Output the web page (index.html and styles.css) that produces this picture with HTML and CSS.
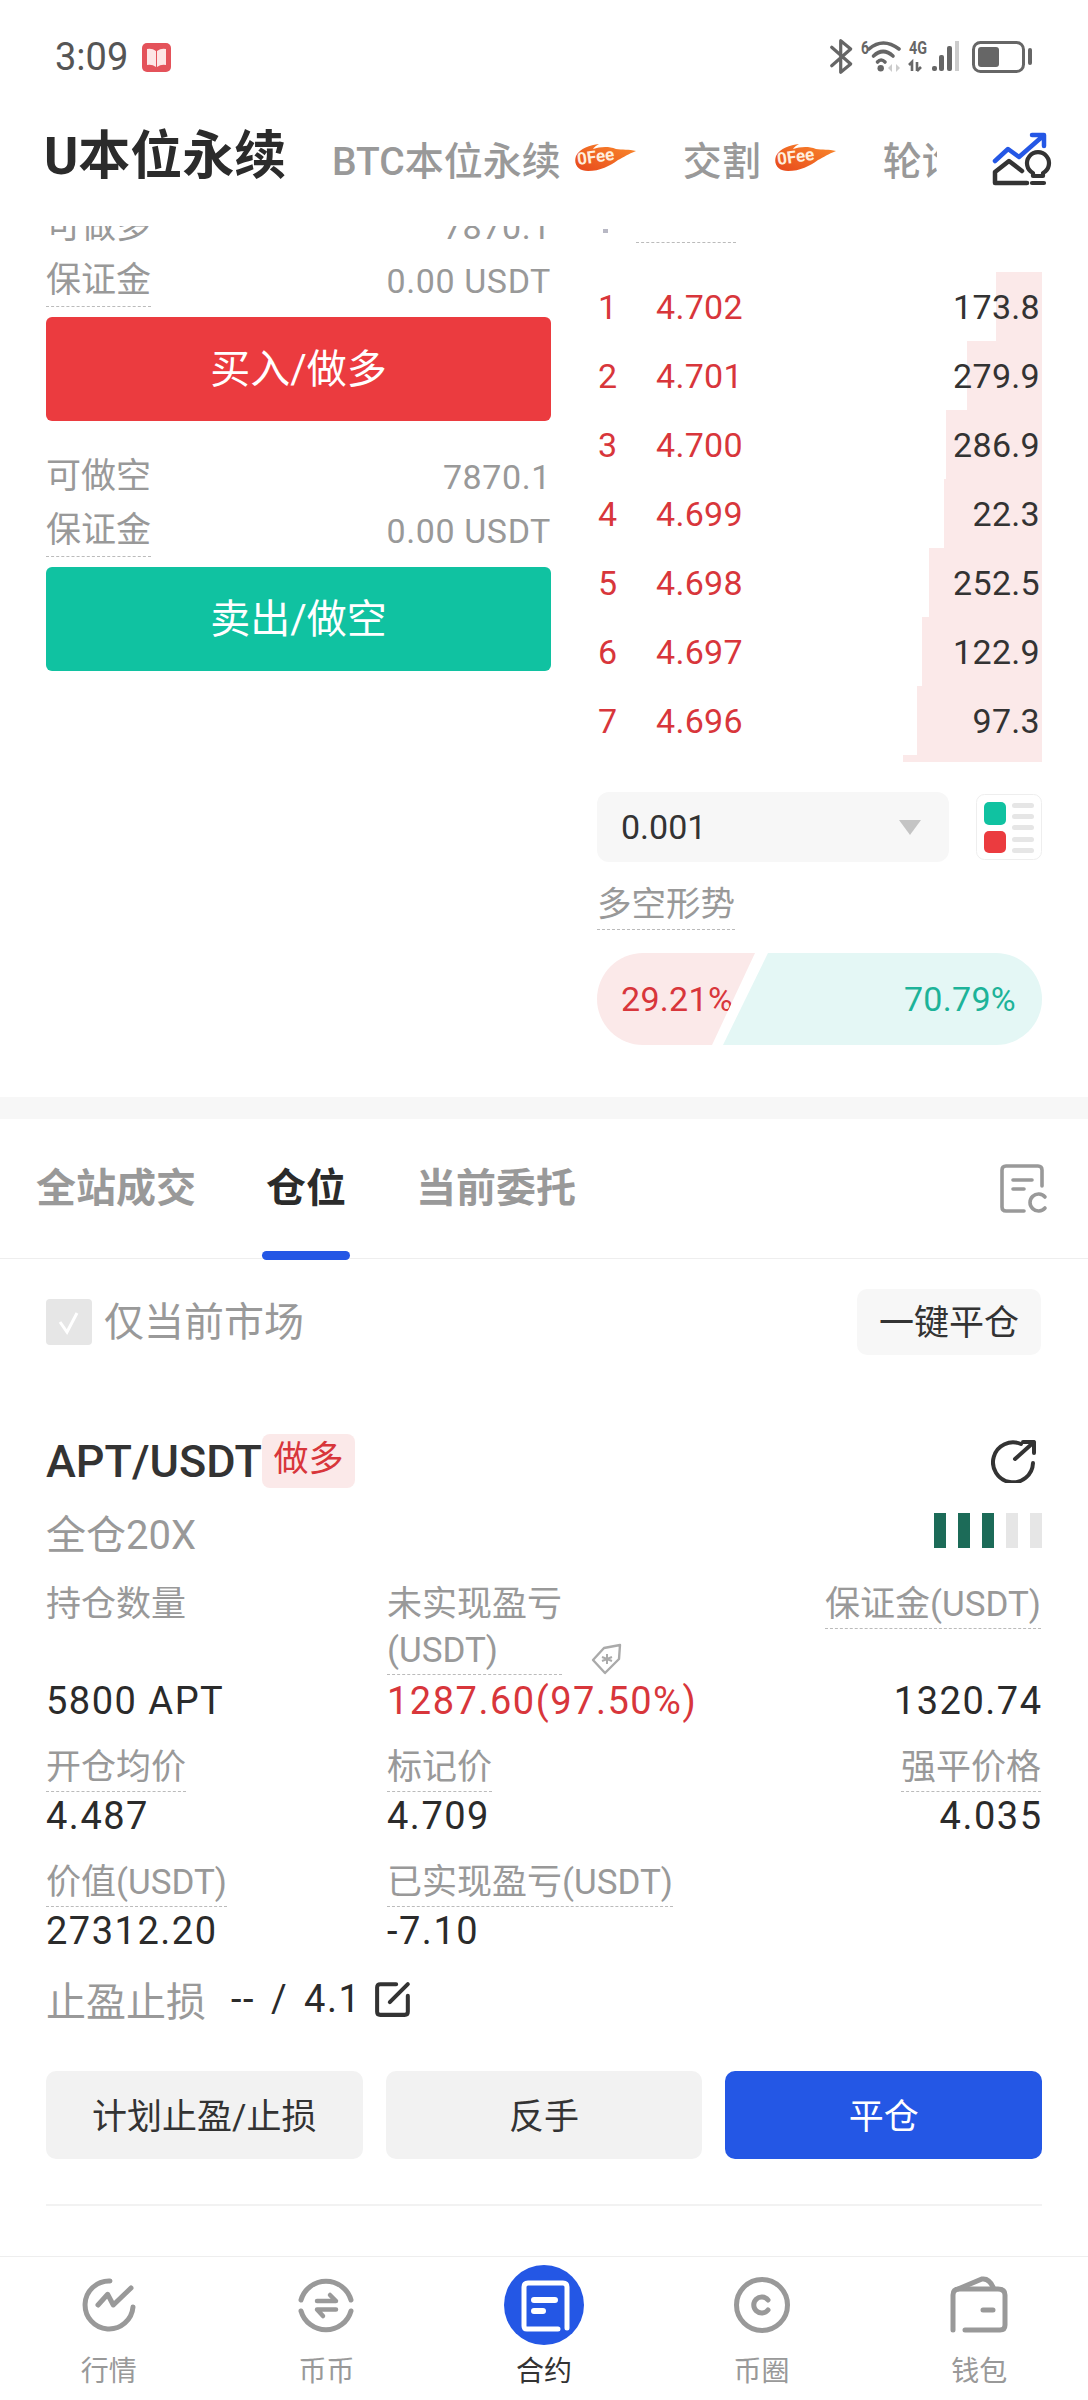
FILE: index.html
```html
<!DOCTYPE html>
<html lang="zh-Hans">
<head>
  <meta charset="UTF-8" />
  <meta name="viewport" content="width=device-width, initial-scale=1.0" />
  <title>U本位永续</title>
  <link rel="stylesheet" href="styles.css">
</head>
<body>
  <div class="status-bar">
    <div class="status-left">
      <span class="clock">3:09</span>
      <svg class="status-book" viewBox="0 0 29 29">
        <rect width="29" height="29" rx="5" fill="#e4525a"/>
        <path d="M5 6 Q10 5 14 8 V24 Q10 21 5 22 Z M24 6 Q19 5 15 8 V24 Q19 21 24 22 Z" fill="#fde6e6"/>
      </svg>
    </div>
    <svg class="status-right" viewBox="0 0 210 40">
      <path d="M3.7 10.3 L22.7 27 L12.7 35.3 V3.7 L22.7 12 L3.7 28.7" fill="none" stroke="#666" stroke-width="3.2" stroke-linejoin="round" stroke-linecap="round"/>
      <text x="33" y="17" class="status-tiny" textLength="8" lengthAdjust="spacingAndGlyphs">6</text>
      <g fill="none" stroke="#666" stroke-width="3.6" stroke-linecap="round">
        <path d="M41 12 Q55 0 71 12"/>
        <path d="M45.5 19 Q55 10 65 19"/>
        <path d="M49.5 25 Q53 21 57 25"/>
      </g>
      <circle cx="52.7" cy="31.3" r="3.2" fill="#666"/>
      <path d="M60 31 L64 27 V35 Z M72 31 L68 27 V35 Z" fill="#ccc"/>
      <text x="81" y="17" class="status-tiny" textLength="18" lengthAdjust="spacingAndGlyphs">4G</text>
      <path d="M84 34 V25 L81 28 M89 25 V34 M89 34 L93 30" fill="none" stroke="#666" stroke-width="2.6"/>
      <rect x="104" y="29" width="5" height="5" rx="2" fill="#666"/>
      <rect x="111" y="18" width="5" height="16" rx="2" fill="#666"/>
      <rect x="119" y="9" width="5" height="25" rx="2" fill="#666"/>
      <rect x="127" y="4" width="4" height="30" fill="#ccc"/>
      <rect x="145.5" y="5.5" width="50" height="29" rx="7" fill="none" stroke="#666" stroke-width="3"/>
      <rect x="150" y="10" width="21" height="20" rx="3" fill="#666"/>
      <rect x="200" y="11" width="4" height="17" rx="2" fill="#666"/>
    </svg>
  </div>

  <header class="top-nav">
    <div class="nav-title">U本位永续</div>
    <div class="nav-tabs">
      <span class="nav-tab">BTC本位永续</span>
      <svg class="flame" viewBox="0 0 62 28">
        <defs>
          <linearGradient id="flameFill" x1="0" y1="1" x2="1" y2="0">
            <stop offset="0" stop-color="#e8481c"/>
            <stop offset="1" stop-color="#f98a2c"/>
          </linearGradient>
        </defs>
        <path d="M2 12 C6 4 16 1 25 0 C22 2 20 3 19 5 C26 3 34 2 42 5 C48 6 55 5 62 7 C54 10 50 13 44 16 C36 22 26 27 14 27 C5 27 -1 21 2 12 Z" fill="url(#flameFill)"/>
        <text x="4" y="21" class="flame-text" transform="rotate(-8 4 21)">0Fee</text>
      </svg>
      <span class="nav-tab nav-tab-gap">交割</span>
      <svg class="flame" viewBox="0 0 62 28">
        <path d="M2 12 C6 4 16 1 25 0 C22 2 20 3 19 5 C26 3 34 2 42 5 C48 6 55 5 62 7 C54 10 50 13 44 16 C36 22 26 27 14 27 C5 27 -1 21 2 12 Z" fill="url(#flameFill)"/>
        <text x="4" y="21" class="flame-text" transform="rotate(-8 4 21)">0Fee</text>
      </svg>
      <span class="nav-tab nav-tab-gap">轮询</span>
    </div>
    <svg class="nav-icon" viewBox="0 0 70 60">
      <path d="M8 31 L21 19 L32 27 L56 6 M45 5 H57 V16" fill="none" stroke="#2457e5" stroke-width="4.5" stroke-linecap="round" stroke-linejoin="round"/>
      <path d="M40 53 H8 V42 L22 31 L35 41" fill="none" stroke="#333" stroke-width="4.5" stroke-linecap="round" stroke-linejoin="round"/>
      <path d="M46 46 V43 A11 11 0 1 1 56 43 V46 Z M45 53 H57" fill="none" stroke="#333" stroke-width="4.2" stroke-linecap="round" stroke-linejoin="round"/>
    </svg>
  </header>

  <div class="trade">
    <div class="trade-left">
      <div class="form-row"><span class="dash-none">可做多</span><span>7870.1</span></div>
      <div class="form-row"><span class="dash">保证金</span><span>0.00 USDT</span></div>
      <button class="trade-btn buy">买入/做多</button>
      <div class="form-row form-row-gap"><span class="dash-none">可做空</span><span>7870.1</span></div>
      <div class="form-row"><span class="dash">保证金</span><span>0.00 USDT</span></div>
      <button class="trade-btn sell">卖出/做空</button>
    </div>

    <div class="trade-right">
      <div class="book-head"><i class="book-dot"></i><i class="book-dash"></i></div>
      <div class="book-row"><i class="book-bar" style="width:46px"></i><span class="book-no">1</span><span class="book-price">4.702</span><span class="book-vol">173.8</span></div>
      <div class="book-row"><i class="book-bar" style="width:75px"></i><span class="book-no">2</span><span class="book-price">4.701</span><span class="book-vol">279.9</span></div>
      <div class="book-row"><i class="book-bar" style="width:96px"></i><span class="book-no">3</span><span class="book-price">4.700</span><span class="book-vol">286.9</span></div>
      <div class="book-row"><i class="book-bar" style="width:98px"></i><span class="book-no">4</span><span class="book-price">4.699</span><span class="book-vol">22.3</span></div>
      <div class="book-row"><i class="book-bar" style="width:113px"></i><span class="book-no">5</span><span class="book-price">4.698</span><span class="book-vol">252.5</span></div>
      <div class="book-row"><i class="book-bar" style="width:120px"></i><span class="book-no">6</span><span class="book-price">4.697</span><span class="book-vol">122.9</span></div>
      <div class="book-row"><i class="book-bar" style="width:125px"></i><span class="book-no">7</span><span class="book-price">4.696</span><span class="book-vol">97.3</span></div>
      <div class="book-tail"></div>

      <div class="book-tools">
        <div class="depth-select"><span>0.001</span><i class="caret"></i></div>
        <svg class="layout-icon" viewBox="0 0 66 66">
          <rect x="0.5" y="0.5" width="65" height="65" rx="8" fill="#fff" stroke="#eee"/>
          <rect x="8" y="8" width="22" height="23" rx="5" fill="#10c2a1"/>
          <rect x="8" y="37" width="22" height="22" rx="5" fill="#eb3b3f"/>
          <g fill="#e6e6e6">
            <rect x="36" y="9" width="22" height="5" rx="2.5"/>
            <rect x="36" y="20" width="22" height="5" rx="2.5"/>
            <rect x="36" y="31" width="22" height="5" rx="2.5"/>
            <rect x="36" y="43" width="22" height="5" rx="2.5"/>
            <rect x="36" y="54" width="22" height="5" rx="2.5"/>
          </g>
        </svg>
      </div>

      <div class="trend-label"><span class="dash">多空形势</span></div>
      <div class="trend-pill">
        <span class="trend-long">29.21%</span>
        <span class="trend-short">70.79%</span>
      </div>
    </div>
  </div>

  <div class="band"></div>

  <div class="list-tabs">
    <div class="list-tab">全站成交</div>
    <div class="list-tab active">仓位</div>
    <div class="list-tab">当前委托</div>
    <svg class="list-icon" viewBox="0 0 48 50">
      <path d="M42 22 V6 Q42 2 38 2 H6 Q2 2 2 6 V43 Q2 47 6 47 H24 M13 16 H32 M13 25 H24" fill="none" stroke="#999" stroke-width="3.6" stroke-linecap="round"/>
      <path d="M45 33 A8.5 8.5 0 1 0 45 44" fill="none" stroke="#999" stroke-width="3.6" stroke-linecap="round"/>
    </svg>
  </div>

  <div class="filter-row">
    <div class="filter-check">
      <span class="checkbox">
        <svg viewBox="0 0 46 46"><path d="M14 23 L21 33 L31 14" fill="none" stroke="#fff" stroke-width="3"/></svg>
      </span>
      <span class="filter-text">仅当前市场</span>
    </div>
    <button class="close-all">一键平仓</button>
  </div>

  <section class="position">
    <div class="pos-title">
      <span class="pos-symbol">APT/USDT</span>
      <span class="pos-tag">做多</span>
      <svg class="pos-share" viewBox="0 0 48 44">
        <path d="M30 5 A20 20 0 1 0 42 24" fill="none" stroke="#333" stroke-width="4" stroke-linecap="round"/>
        <path d="M24 20 L43 3 M32 3 H43 V14" fill="none" stroke="#333" stroke-width="4" stroke-linecap="round" stroke-linejoin="round"/>
      </svg>
    </div>
    <div class="pos-lever">
      <span>全仓20X</span>
      <div class="risk-bars">
        <i class="on"></i><i class="on"></i><i class="on"></i><i></i><i></i>
      </div>
    </div>

    <div class="pos-grid">
      <div class="cell">
        <span class="cell-label plain">持仓数量</span>
        <span class="cell-value">5800 APT</span>
      </div>
      <div class="cell cell-pnl">
        <span class="cell-label">未实现盈亏<br>(USDT)</span>
        <svg class="pnl-tag" viewBox="0 0 32 32">
          <path d="M29 2 L13 5 L2 17 L14 30 L28 16 Z" fill="none" stroke="#aaa" stroke-width="2.4" stroke-linejoin="round"/>
          <path d="M16 11 V21 M11 14 L21 18 M11 18 L21 14" stroke="#aaa" stroke-width="2"/>
        </svg>
        <span class="cell-value red">1287.60(97.50%)</span>
      </div>
      <div class="cell cell-end">
        <span class="cell-label">保证金(USDT)</span>
        <span class="cell-value">1320.74</span>
      </div>
      <div class="cell">
        <span class="cell-label">开仓均价</span>
        <span class="cell-value">4.487</span>
      </div>
      <div class="cell">
        <span class="cell-label">标记价</span>
        <span class="cell-value">4.709</span>
      </div>
      <div class="cell cell-end">
        <span class="cell-label">强平价格</span>
        <span class="cell-value">4.035</span>
      </div>
      <div class="cell">
        <span class="cell-label">价值(USDT)</span>
        <span class="cell-value">27312.20</span>
      </div>
      <div class="cell">
        <span class="cell-label">已实现盈亏(USDT)</span>
        <span class="cell-value">-7.10</span>
      </div>
    </div>

    <div class="pos-tpsl">
      <span class="tpsl-label">止盈止损</span>
      <span class="tpsl-value">-- / 4.1</span>
      <svg class="tpsl-edit" viewBox="0 0 34 34">
        <path d="M20 3 H5 Q2 3 2 6 V29 Q2 32 5 32 H28 Q31 32 31 29 V14 M14 20 L31 3" fill="none" stroke="#333" stroke-width="3.8" stroke-linecap="round"/>
      </svg>
    </div>

    <div class="pos-actions">
      <button class="pos-btn">计划止盈/止损</button>
      <button class="pos-btn">反手</button>
      <button class="pos-btn primary">平仓</button>
    </div>
    <div class="pos-divider"></div>
  </section>

  <nav class="bottom-nav">
    <a class="nav-item">
      <svg viewBox="0 0 80 80">
        <path d="M41 16 A24 24 0 1 0 64 42" fill="none" stroke="#999" stroke-width="5" stroke-linecap="round"/>
        <path d="M29 40 L38.7 29.3 L44.3 40 L62 23" fill="none" stroke="#999" stroke-width="5" stroke-linecap="round" stroke-linejoin="round"/>
      </svg>
      行情
    </a>
    <a class="nav-item">
      <svg viewBox="0 0 80 80">
        <path d="M15 35 A26 26 0 0 1 65 35 M15 46 A26 26 0 0 0 65 46" fill="none" stroke="#999" stroke-width="5" stroke-linecap="round"/>
        <path d="M31 36 H50 L44 30 M50 44.5 H31 L37 51" fill="none" stroke="#999" stroke-width="4.5" stroke-linecap="round" stroke-linejoin="round"/>
      </svg>
      币币
    </a>
    <a class="nav-item active">
      <svg viewBox="0 0 80 80">
        <circle cx="40" cy="40" r="40" fill="#2457e5"/>
        <path d="M54 64 H23 Q20 64 20 61 V22 Q20 18 24 18 H59 Q63 18 63 22 V63" fill="none" stroke="#fff" stroke-width="5" stroke-linecap="round"/>
        <path d="M30 35 H51 M30 46 H39" fill="none" stroke="#fff" stroke-width="6" stroke-linecap="round"/>
      </svg>
      合约
    </a>
    <a class="nav-item">
      <svg viewBox="0 0 80 80">
        <circle cx="40" cy="40" r="25.5" fill="none" stroke="#999" stroke-width="5"/>
        <path d="M46 35 A8 8 0 1 0 46 45" fill="none" stroke="#999" stroke-width="5" stroke-linecap="round"/>
      </svg>
      币圈
    </a>
    <a class="nav-item">
      <svg viewBox="0 0 80 80">
        <path d="M14 65 V30 Q14 24 20 24 H59 Q66 24 66 30 V60 Q66 65 61 65 H26" fill="none" stroke="#999" stroke-width="5" stroke-linecap="round"/>
        <path d="M19 24 L43 14 Q50 13 54 22 M44 45 H54" fill="none" stroke="#999" stroke-width="5" stroke-linecap="round"/>
      </svg>
      钱包
    </a>
  </nav>
</body>
</html>
```

FILE: styles.css
```css
* { box-sizing: border-box; }

body {
  margin: 0;
  width: 1088px;
  height: 2400px;
  overflow: hidden;
  display: flex;
  flex-direction: column;
  background: #fff;
  color: #333;
  font-family: Roboto, "Noto Sans CJK SC", sans-serif;
}

button {
  border: none;
  font-family: inherit;
}

/* status bar */
.status-bar {
  height: 114px;
  padding: 0 50px 0 55px;
  display: flex;
  align-items: center;
  justify-content: space-between;
}

.status-left {
  display: flex;
  align-items: center;
  gap: 14px;
}

.clock {
  font-size: 38px;
  color: #555;
}

.status-book {
  width: 29px;
  height: 29px;
}

.status-right {
  width: 210px;
  height: 40px;
}

.status-tiny {
  font-family: Roboto, sans-serif;
  font-size: 18px;
  font-weight: 700;
  fill: #666;
}

/* top nav */
.top-nav {
  height: 112px;
  padding: 0 0 24px 44px;
  display: flex;
  align-items: center;
}

.nav-title {
  width: 288px;
  font-size: 52px;
  line-height: 60px;
  margin-top: -2px;
  font-weight: 700;
  color: #2b2b2b;
  white-space: nowrap;
}

.nav-tabs {
  width: 605px;
  overflow: hidden;
  display: flex;
  align-items: center;
  white-space: nowrap;
}

.nav-tab {
  flex: none;
  font-size: 39px;
  font-weight: 500;
  color: #999;
}

.nav-tab-gap {
  margin-left: 47px;
}

.flame {
  flex: none;
  width: 62px;
  height: 28px;
  margin-left: 13px;
}

.flame-text {
  font-family: Roboto, sans-serif;
  font-size: 17px;
  font-weight: 700;
  fill: #ffeedd;
}

.nav-icon {
  flex: none;
  width: 70px;
  height: 60px;
  margin: 3px 0 0 50px;
}

/* trade area */
.trade {
  flex: none;
  height: 871px;
  padding: 0 46px;
  display: flex;
  justify-content: space-between;
  overflow: hidden;
}

.trade-left {
  width: 505px;
  margin-top: -27px;
}

.form-row {
  height: 54px;
  padding-top: 2px;
  display: flex;
  align-items: center;
  justify-content: space-between;
  font-size: 34px;
  letter-spacing: 0.6px;
  color: #999;
}

.form-row-gap {
  margin-top: 28px;
}

.dash,
.dash-none {
  font-size: 35px;
  letter-spacing: 0;
  line-height: 50px;
  color: #999;
  border-bottom: 1px dashed #bbb;
}

.dash-none {
  border-bottom-color: transparent;
}

.trade-btn {
  display: block;
  width: 100%;
  height: 104px;
  margin-top: 10px;
  padding-bottom: 8px;
  border-radius: 6px;
  color: #fff;
  font-size: 40px;
}

.trade-btn.buy { background: #eb3b3f; }
.trade-btn.sell { background: #10c2a1; }

.trade-right {
  width: 445px;
}

.book-head {
  height: 46px;
  position: relative;
}

.book-dot {
  position: absolute;
  left: 6px;
  top: 3px;
  width: 5px;
  height: 4px;
  background: #b8b8c4;
}

.book-dash {
  position: absolute;
  left: 39px;
  top: 16px;
  width: 100px;
  border-top: 1px dashed #bbb;
}

.book-row {
  position: relative;
  height: 69px;
  display: flex;
  align-items: center;
  font-size: 34px;
  letter-spacing: 0.3px;
}

.book-bar {
  position: absolute;
  top: 0;
  right: 0;
  bottom: 0;
  background: #fbe9e9;
}

.book-no,
.book-price,
.book-vol {
  position: relative;
}

.book-no {
  width: 59px;
  padding-left: 1px;
  color: #d8363b;
}

.book-price { color: #d8363b; }

.book-vol {
  margin-left: auto;
  padding-right: 2px;
}

.book-tail {
  height: 7px;
  margin-left: 306px;
  background: #fbe9e9;
}

.book-tools {
  margin-top: 30px;
  display: flex;
  align-items: center;
  justify-content: space-between;
}

.depth-select {
  width: 352px;
  height: 70px;
  padding: 0 28px 0 24px;
  border-radius: 12px;
  background: #f7f7f7;
  display: flex;
  align-items: center;
  justify-content: space-between;
  font-size: 34px;
}

.caret {
  width: 0;
  height: 0;
  border-left: 11px solid transparent;
  border-right: 11px solid transparent;
  border-top: 15px solid #c4c4c4;
}

.layout-icon {
  width: 66px;
  height: 66px;
}

.trend-label {
  margin-top: 17px;
  height: 51px;
}

.trend-label .dash {
  display: inline-block;
  font-size: 34.5px;
}

.trend-pill {
  height: 92px;
  margin-top: 23px;
  display: grid;
  font-size: 34px;
  letter-spacing: 0.3px;
}

.trend-long,
.trend-short {
  grid-area: 1 / 1;
  display: flex;
  align-items: center;
}

.trend-long {
  justify-self: start;
  width: 158px;
  padding-left: 24px;
  border-radius: 46px 0 0 46px;
  background: #fbe9e9;
  color: #d8363b;
  clip-path: polygon(0 0, 100% 0, 72.8% 100%, 0 100%);
}

.trend-short {
  justify-self: end;
  justify-content: flex-end;
  width: 319px;
  padding-right: 26px;
  border-radius: 0 46px 46px 0;
  background: #e4f7f5;
  color: #1db399;
  clip-path: polygon(14.1% 0, 100% 0, 100% 100%, 0 100%);
}

.band {
  flex: none;
  height: 22px;
  background: #f7f7f7;
}

/* position list tabs */
.list-tabs {
  flex: none;
  height: 140px;
  padding: 0 40px 0 36px;
  border-bottom: 1px solid #eee;
  display: flex;
  align-items: center;
  gap: 70px;
}

.list-tab {
  position: relative;
  font-size: 40px;
  font-weight: 700;
  line-height: 140px;
  color: #999;
}

.list-tab.active {
  color: #2b2b2b;
}

.list-tab.active::after {
  content: "";
  position: absolute;
  left: -4px;
  right: -4px;
  bottom: -1px;
  height: 9px;
  border-radius: 5px;
  background: #2457e5;
}

.list-icon {
  width: 48px;
  height: 50px;
  margin-left: auto;
}

.filter-row {
  flex: none;
  padding: 30px 47px 0 46px;
  display: flex;
  align-items: center;
  justify-content: space-between;
}

.filter-check {
  display: flex;
  align-items: center;
  gap: 12px;
  font-size: 40px;
  color: #999;
}

.filter-text {
  margin-top: -6px;
}

.checkbox {
  width: 46px;
  height: 46px;
  border-radius: 4px;
  background: #e6e6e6;
}

.checkbox svg {
  display: block;
}

.close-all {
  width: 184px;
  height: 66px;
  padding: 0 0 6px;
  border-radius: 10px;
  background: #f7f7f7;
  color: #333;
  font-size: 35px;
}

/* position card */
.position {
  flex: none;
  padding: 79px 46px 0;
}

.pos-title {
  height: 54px;
  display: flex;
  align-items: center;
}

.pos-symbol {
  font-size: 45px;
  font-weight: 500;
  width: 216px;
  white-space: nowrap;
}

.pos-tag {
  width: 93px;
  height: 54px;
  border-radius: 8px;
  background: #fbe9e9;
  color: #d8363b;
  font-size: 35px;
  text-align: center;
  line-height: 52px;
}

.pos-share {
  width: 48px;
  height: 44px;
  margin-left: auto;
  margin-right: 3px;
}

.pos-lever {
  height: 40px;
  margin-top: 28px;
  display: flex;
  justify-content: space-between;
  font-size: 40px;
  line-height: 40px;
  color: #999;
}

.risk-bars {
  display: flex;
  gap: 11.5px;
  margin-top: -3px;
}

.risk-bars i {
  width: 12.5px;
  height: 35px;
  background: #e6e6e6;
}

.risk-bars i.on {
  background: #1c6b58;
}

.pos-grid {
  margin-top: 26px;
  padding-right: 1px;
  display: grid;
  grid-template-columns: 341px 1fr 1fr;
  row-gap: 20px;
}

.cell {
  position: relative;
  display: flex;
  flex-direction: column;
  align-items: flex-start;
}

.cell-end {
  align-items: flex-end;
  text-align: right;
}

.cell-label {
  font-size: 35px;
  line-height: 46px;
  color: #999;
  white-space: nowrap;
  border-bottom: 1px dashed #bbb;
}

.cell-label.plain {
  border-bottom: none;
}

.cell-pnl .cell-label {
  margin-bottom: 2px;
}

.cell-value {
  margin-top: auto;
  font-size: 38px;
  line-height: 48px;
  letter-spacing: 1.5px;
  color: #2b2b2b;
}

.cell-end .cell-value {
  margin-right: -1.5px;
}

.cell-value.red {
  color: #d8363b;
}

.pnl-tag {
  position: absolute;
  left: 204px;
  top: 61px;
  width: 32px;
  height: 32px;
}

.pos-tpsl {
  height: 44px;
  margin-top: 22px;
  display: flex;
  align-items: center;
}

.tpsl-label {
  font-size: 40px;
  color: #999;
}

.tpsl-value {
  margin-left: 25px;
  font-size: 38px;
  letter-spacing: 1.5px;
  word-spacing: 5px;
  color: #2b2b2b;
}

.tpsl-edit {
  width: 36px;
  height: 36px;
  margin-left: 14px;
}

.pos-actions {
  margin-top: 50px;
  display: flex;
  gap: 23px;
}

.pos-btn {
  flex: 1;
  height: 88px;
  padding-bottom: 5px;
  border-radius: 10px;
  background: #f2f2f2;
  color: #333;
  font-size: 35px;
}

.pos-btn.primary {
  background: #2457e5;
  color: #fff;
}

.pos-divider {
  margin-top: 45px;
  border-top: 2px solid #f2f2f2;
}

/* bottom nav */
.bottom-nav {
  margin-top: auto;
  height: 144px;
  padding-top: 8px;
  border-top: 1px solid #eee;
  display: flex;
}

.nav-item {
  flex: 1;
  display: flex;
  flex-direction: column;
  align-items: center;
  gap: 12px;
  font-size: 28px;
  line-height: 30px;
  color: #999;
}

.nav-item svg {
  width: 80px;
  height: 80px;
}

.nav-item.active {
  color: #333;
}
```
